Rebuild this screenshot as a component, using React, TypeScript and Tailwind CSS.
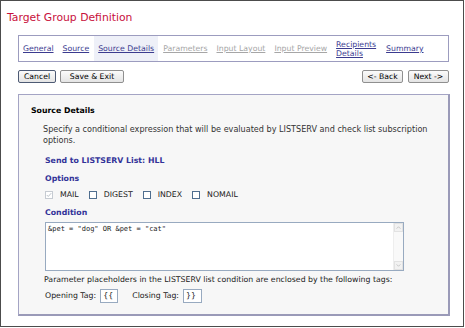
const TABS = [
  { label: 'General', state: 'link' },
  { label: 'Source', state: 'link' },
  { label: 'Source Details', state: 'active' },
  { label: 'Parameters', state: 'off' },
  { label: 'Input Layout', state: 'off' },
  { label: 'Input Preview', state: 'off' },
  { label: 'Recipients Details', state: 'link', wrap: true },
  { label: 'Summary', state: 'link' },
];

const OPTIONS = [
  { label: 'MAIL', checked: true },
  { label: 'DIGEST', checked: false },
  { label: 'INDEX', checked: false },
  { label: 'NOMAIL', checked: false },
];

function Btn({ children, w, primary }: { children: React.ReactNode; w: string; primary?: boolean }) {
  return (
    <button
      className={`${w} h-[13px] flex items-center justify-center rounded-[2px] bg-gradient-to-b from-[#fbfbfb] to-[#e4e4e4] text-[7.7px] leading-none text-black ${
        primary ? 'border border-[#4d5a74]' : 'border border-[#8f8f8f]'
      }`}
    >
      {children}
    </button>
  );
}

function Check({ checked }: { checked: boolean }) {
  return (
    <span
      className={`w-[8px] h-[8px] flex items-center justify-center bg-white border ${
        checked ? 'border-[#c6cbd2]' : 'border-[#4f6e8f]'
      }`}
    >
      {checked && (
        <svg viewBox="0 0 8 8" className="w-[6px] h-[6px]">
          <path d="M1 4 L3 6 L7 1.5" fill="none" stroke="#b5bcc4" strokeWidth="1.2" />
        </svg>
      )}
    </span>
  );
}

export default function App() {
  return (
    <div className="w-[465px] h-[328px] bg-white font-['DejaVu_Sans',sans-serif]">
      <div className="w-[464px] h-[327px] border border-[#4c4c4c] flex flex-col">
        {/* Title */}
        <div className="pl-[6px] pt-[10px] h-[23px] text-[10.8px] leading-[13px] text-[#c8103c]">
          Target Group Definition
        </div>

        {/* Wizard tabs */}
        <div className="ml-[17px] mt-[11px] w-[431px] h-[27px] border border-[#9c9cbf] bg-white flex items-stretch gap-[1px] text-[7.75px]">
          {TABS.map((t) => (
            <div
              key={t.label}
              className={`px-[4px] flex items-center ${t.state === 'active' ? 'bg-[#eef0f8]' : ''}`}
            >
              <span
                className={`underline leading-[9px] ${t.wrap ? 'w-[41px]' : 'whitespace-nowrap'} ${
                  t.state === 'off' ? 'text-[#a6a6a6]' : 'text-[#3b3b8f]'
                }`}
              >
                {t.label}
              </span>
            </div>
          ))}
        </div>

        {/* Buttons */}
        <div className="ml-[17px] mt-[8px] w-[431px] flex justify-between">
          <div className="flex gap-[4px]">
            <Btn w="w-[38px]" primary>Cancel</Btn>
            <Btn w="w-[64px]">Save &amp; Exit</Btn>
          </div>
          <div className="flex gap-[5px]">
            <Btn w="w-[41px]">&lt;- Back</Btn>
            <Btn w="w-[41px]">Next -&gt;</Btn>
          </div>
        </div>

        {/* Panel */}
        <div className="ml-[17px] mt-[11px] w-[432px] h-[222px] border border-[#a4a4c4] border-b-2 border-r-2 border-b-[#9a9ab8] border-r-[#9a9ab8] bg-[#f7f7f7] flex flex-col text-[7.8px]">
          <div className="ml-[12px] mt-[11px] h-[10px] leading-[10px] font-bold text-black">Source Details</div>
          <p className="ml-[24px] mt-[8px] w-[392px] text-[8.1px] leading-[11px] text-[#333]">
            Specify a conditional expression that will be evaluated by LISTSERV and check list subscription options.
          </p>
          <div className="ml-[26px] mt-[10px] h-[10px] leading-[10px] font-bold text-[#333399]">
            Send to LISTSERV List: HLL
          </div>
          <div className="ml-[26px] mt-[8px] h-[10px] leading-[10px] font-bold text-[#333399]">Options</div>
          <div className="ml-[26px] mt-[6px] h-[10px] flex items-center gap-[10px] text-[#222]">
            {OPTIONS.map((o) => (
              <label key={o.label} className="flex items-center gap-[7px]">
                <Check checked={o.checked} />
                <span className="leading-[10px]">{o.label}</span>
              </label>
            ))}
          </div>
          <div className="ml-[26px] mt-[8px] h-[10px] leading-[10px] font-bold text-[#333399]">Condition</div>
          <div className="ml-[26px] mt-[4px] w-[359px] h-[49px] border border-[#98aac0] bg-white flex">
            <div className="flex-1 pl-[2px] pt-[2px] font-['DejaVu_Sans_Mono',monospace] text-[7px] leading-[9px] text-[#222] whitespace-pre">
              &amp;pet = "dog" OR &amp;pet = "cat"
            </div>
            <div className="w-[10px] flex flex-col justify-between bg-[#f9f9f9] border-l border-[#eeeeee]">
              <div className="h-[9px] flex items-center justify-center border border-[#e2e2e2] bg-[#f2f2f2]">
                <svg viewBox="0 0 6 4" className="w-[5px] h-[3px]">
                  <path d="M0.5 3.5 L3 1 L5.5 3.5" fill="none" stroke="#b8b8b8" strokeWidth="1" />
                </svg>
              </div>
              <div className="h-[9px] flex items-center justify-center border border-[#e2e2e2] bg-[#f2f2f2]">
                <svg viewBox="0 0 6 4" className="w-[5px] h-[3px]">
                  <path d="M0.5 0.5 L3 3 L5.5 0.5" fill="none" stroke="#b8b8b8" strokeWidth="1" />
                </svg>
              </div>
            </div>
          </div>
          <div className="ml-[25px] mt-[4px] h-[10px] leading-[10px] text-[#222]">
            Parameter placeholders in the LISTSERV list condition are enclosed by the following tags:
          </div>
          <div className="ml-[26px] mt-[4px] h-[14px] flex items-center text-[#222]">
            <span>Opening Tag:</span>
            <span className="ml-[4px] w-[18px] h-[14px] border border-[#98aac0] bg-white pl-[2px] leading-[12px]">{'{{'}</span>
            <span className="ml-[14px]">Closing Tag:</span>
            <span className="ml-[4px] w-[19px] h-[14px] border border-[#98aac0] bg-white pl-[2px] leading-[12px]">{'}}'}</span>
          </div>
        </div>
      </div>
    </div>
  );
}
